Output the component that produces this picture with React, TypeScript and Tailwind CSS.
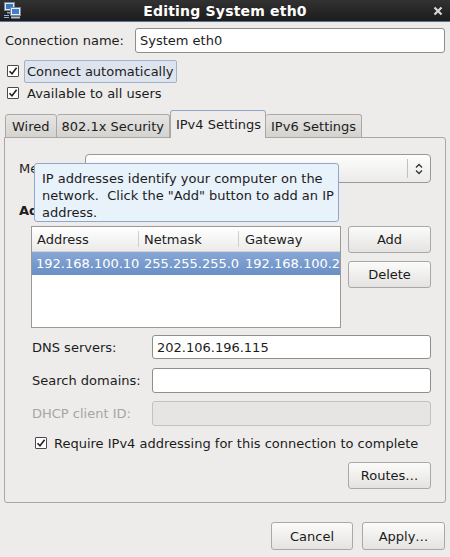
import React from "react";

const Check = () => (
  <span className="inline-flex items-center justify-center w-[12px] h-[12px] border border-[#4a4a4a] bg-white rounded-[1px] shrink-0">
    <svg width="10" height="10" viewBox="0 0 10 10">
      <path d="M1.5 5.2 L4 7.8 L8.6 1.8" stroke="#222" strokeWidth="1.6" fill="none" />
    </svg>
  </span>
);

const Btn = ({ children, className = "" }: { children: React.ReactNode; className?: string }) => (
  <div
    className={
      "flex items-center justify-center border border-[#a8a8a6] rounded-[3px] bg-gradient-to-b from-[#fbfbfa] to-[#e4e3e1] text-[#1a1a1a] " +
      className
    }
  >
    {children}
  </div>
);

export default function App() {
  return (
    <div className="w-[450px] h-[557px] bg-[#edeceb] text-[13px] leading-none text-[#1c1c1c] font-['DejaVu_Sans',sans-serif] flex flex-col overflow-hidden relative">
      {/* Title bar */}
      <div className="h-[21px] bg-gradient-to-b from-[#323232] to-[#1c1c1c] flex items-center relative shrink-0">
        <svg className="absolute left-[4px] top-[2px]" width="17" height="17" viewBox="0 0 17 17">
          <rect x="0.5" y="0.5" width="10" height="8" fill="#dfe6ee" stroke="#7b8796" />
          <rect x="2" y="2" width="7" height="5" fill="#3a74c4" />
          <rect x="3" y="10" width="5" height="1.5" fill="#9aa3ad" />
          <rect x="6.5" y="5.5" width="10" height="8" fill="#e8eef4" stroke="#7b8796" />
          <rect x="8" y="7" width="7" height="5" fill="#3f7fd0" />
          <rect x="7" y="14.5" width="9" height="2" fill="#b8c0c8" />
          <rect x="0" y="13" width="5" height="1" fill="#8fb4e0" />
          <rect x="0" y="15" width="5" height="1" fill="#8fb4e0" />
        </svg>
        <div className="w-full text-center text-white font-bold text-[14px] tracking-[0.2px]">Editing System eth0</div>
        <svg className="absolute right-[7px] top-[6px]" width="10" height="10" viewBox="0 0 10 10">
          <path d="M1.5 1.5 L8.5 8.5 M8.5 1.5 L1.5 8.5" stroke="#d8d8d8" strokeWidth="2.2" />
        </svg>
      </div>
      <div className="h-[1px] bg-[#5a7396] shrink-0" />

      <div className="flex flex-col px-[4px]">
        {/* Connection name */}
        <div className="flex items-center mt-[6px] h-[25px]">
          <span className="pl-[1px] w-[131px]">Connection name:</span>
          <div className="flex-1 h-[25px] mr-[1px] border border-[#8e8e8c] rounded-[3px] bg-white flex items-center pl-[4px]">
            System eth0
          </div>
        </div>

        {/* Checkboxes */}
        <div className="flex items-center mt-[7px] h-[23px]">
          <span className="ml-[3px]"><Check /></span>
          <span className="ml-[5px] h-[23px] flex items-center px-[2px] border border-[#9fb3cc] rounded-[2px] bg-[#dde4ee]">
            Connect automatically
          </span>
        </div>
        <div className="flex items-center mt-[0px] h-[21px]">
          <span className="ml-[3px]"><Check /></span>
          <span className="ml-[8px]">Available to all users</span>
        </div>

        {/* Tabs */}
        <div className="flex items-end mt-[6px] h-[27px] pl-[1px] relative z-10">
          <div className="h-[24px] px-[6px] flex items-center border border-[#a9a8a5] rounded-t-[3px] bg-gradient-to-b from-[#e6e5e3] to-[#d4d3d0] -mb-[1px]">Wired</div>
          <div className="h-[24px] px-[5px] flex items-center border border-l-0 border-[#a9a8a5] rounded-t-[3px] bg-gradient-to-b from-[#e6e5e3] to-[#d4d3d0] -mb-[1px]">802.1x Security</div>
          <div className="h-[28px] pl-[5px] pr-[4px] pb-[1px] flex items-center border border-[#a9a8a5] border-t-[#8fa8c8] border-b-0 rounded-t-[3px] bg-[#edeceb] -mb-[1px] relative">IPv4 Settings</div>
          <div className="h-[24px] px-[5px] flex items-center border border-l-0 border-[#a9a8a5] rounded-t-[3px] bg-gradient-to-b from-[#e6e5e3] to-[#d4d3d0] -mb-[1px]">IPv6 Settings</div>
        </div>

        {/* Panel */}
        <div className="h-[366px] border border-[#a9a8a5] rounded-b-[3px] rounded-tr-[3px] bg-[#edeceb] flex flex-col pl-[14px] pr-[14px] relative">
          {/* Method */}
          <div className="flex items-center mt-[16px] h-[29px]">
            <span className="w-[66px]">Method:</span>
            <div className="flex-1 h-[29px] border border-[#9a9997] rounded-[4px] bg-gradient-to-b from-[#fdfdfd] to-[#ecebe9] flex items-center justify-end">
              <div className="w-[1px] h-[19px] bg-[#c2c1bf]" />
              <svg className="mx-[7px]" width="8" height="12" viewBox="0 0 8 12">
                <path d="M1 4.5 L4 1.5 L7 4.5 M1 7.5 L4 10.5 L7 7.5" stroke="#333" strokeWidth="1.3" fill="none" />
              </svg>
            </div>
          </div>

          <div className="mt-[21px] font-bold h-[16px]">Addresses</div>

          {/* List + buttons */}
          <div className="flex mt-[6px] pl-[12px]">
            <div className="w-[310px] h-[102px] border border-[#9a9997] bg-white flex flex-col">
              <div className="h-[25px] flex items-center bg-gradient-to-b from-[#ffffff] to-[#ecebea] border-b border-[#d2d1cf] text-[#1c1c1c]">
                <div className="w-[107px] pl-[5px] border-r border-[#cfcecc] h-[16px] flex items-center">Address</div>
                <div className="w-[100px] pl-[5px] border-r border-[#cfcecc] h-[16px] flex items-center">Netmask</div>
                <div className="flex-1 pl-[6px]">Gateway</div>
              </div>
              <div className="h-[23px] flex items-center bg-gradient-to-b from-[#87a7d6] to-[#6a8fc5] text-white">
                <div className="w-[107px] pl-[4px]">192.168.100.10</div>
                <div className="w-[100px] pl-[5px]">255.255.255.0</div>
                <div className="flex-1 pl-[6px]">192.168.100.2</div>
              </div>
            </div>
            <div className="flex flex-col ml-[7px]">
              <Btn className="w-[83px] h-[27px]">Add</Btn>
              <Btn className="w-[83px] h-[27px] mt-[8px]">Delete</Btn>
            </div>
          </div>

          {/* DNS etc */}
          <div className="flex items-center mt-[7px] h-[24px] pl-[13px]">
            <span className="w-[120px]">DNS servers:</span>
            <div className="flex-1 h-[24px] border border-[#8e8e8c] rounded-[3px] bg-white flex items-center pl-[4px]">202.106.196.115</div>
          </div>
          <div className="flex items-center mt-[9px] h-[25px] pl-[13px]">
            <span className="w-[120px]">Search domains:</span>
            <div className="flex-1 h-[25px] border border-[#8e8e8c] rounded-[3px] bg-white" />
          </div>
          <div className="flex items-center mt-[8px] h-[25px] pl-[13px]">
            <span className="w-[120px] text-[#a6a5a3]">DHCP client ID:</span>
            <div className="flex-1 h-[25px] border border-[#c3c2c0] rounded-[3px] bg-[#e6e5e3]" />
          </div>
          <div className="flex items-center mt-[8px] h-[18px] pl-[16px]">
            <Check />
            <span className="ml-[7px]">Require IPv4 addressing for this connection to complete</span>
          </div>
          <div className="flex justify-end mt-[10px]">
            <Btn className="w-[83px] h-[27px]">Routes…</Btn>
          </div>

          {/* Tooltip */}
          <div className="absolute left-[29px] top-[25px] w-[305px] h-[59px] bg-[#e8f2fb] border border-[#8ea8cc] rounded-[3px] pl-[7px] pt-[6px] leading-[17px] text-[#1c1c1c]">
            IP addresses identify your computer on the<br />
            network.&nbsp; Click the "Add" button to add an IP<br />
            address.
          </div>
        </div>

        {/* Bottom buttons */}
        <div className="flex justify-end mt-[19px] pr-[1px] gap-[9px]">
          <Btn className="w-[82px] h-[28px]">Cancel</Btn>
          <Btn className="w-[83px] h-[28px]">Apply…</Btn>
        </div>
      </div>
    </div>
  );
}
